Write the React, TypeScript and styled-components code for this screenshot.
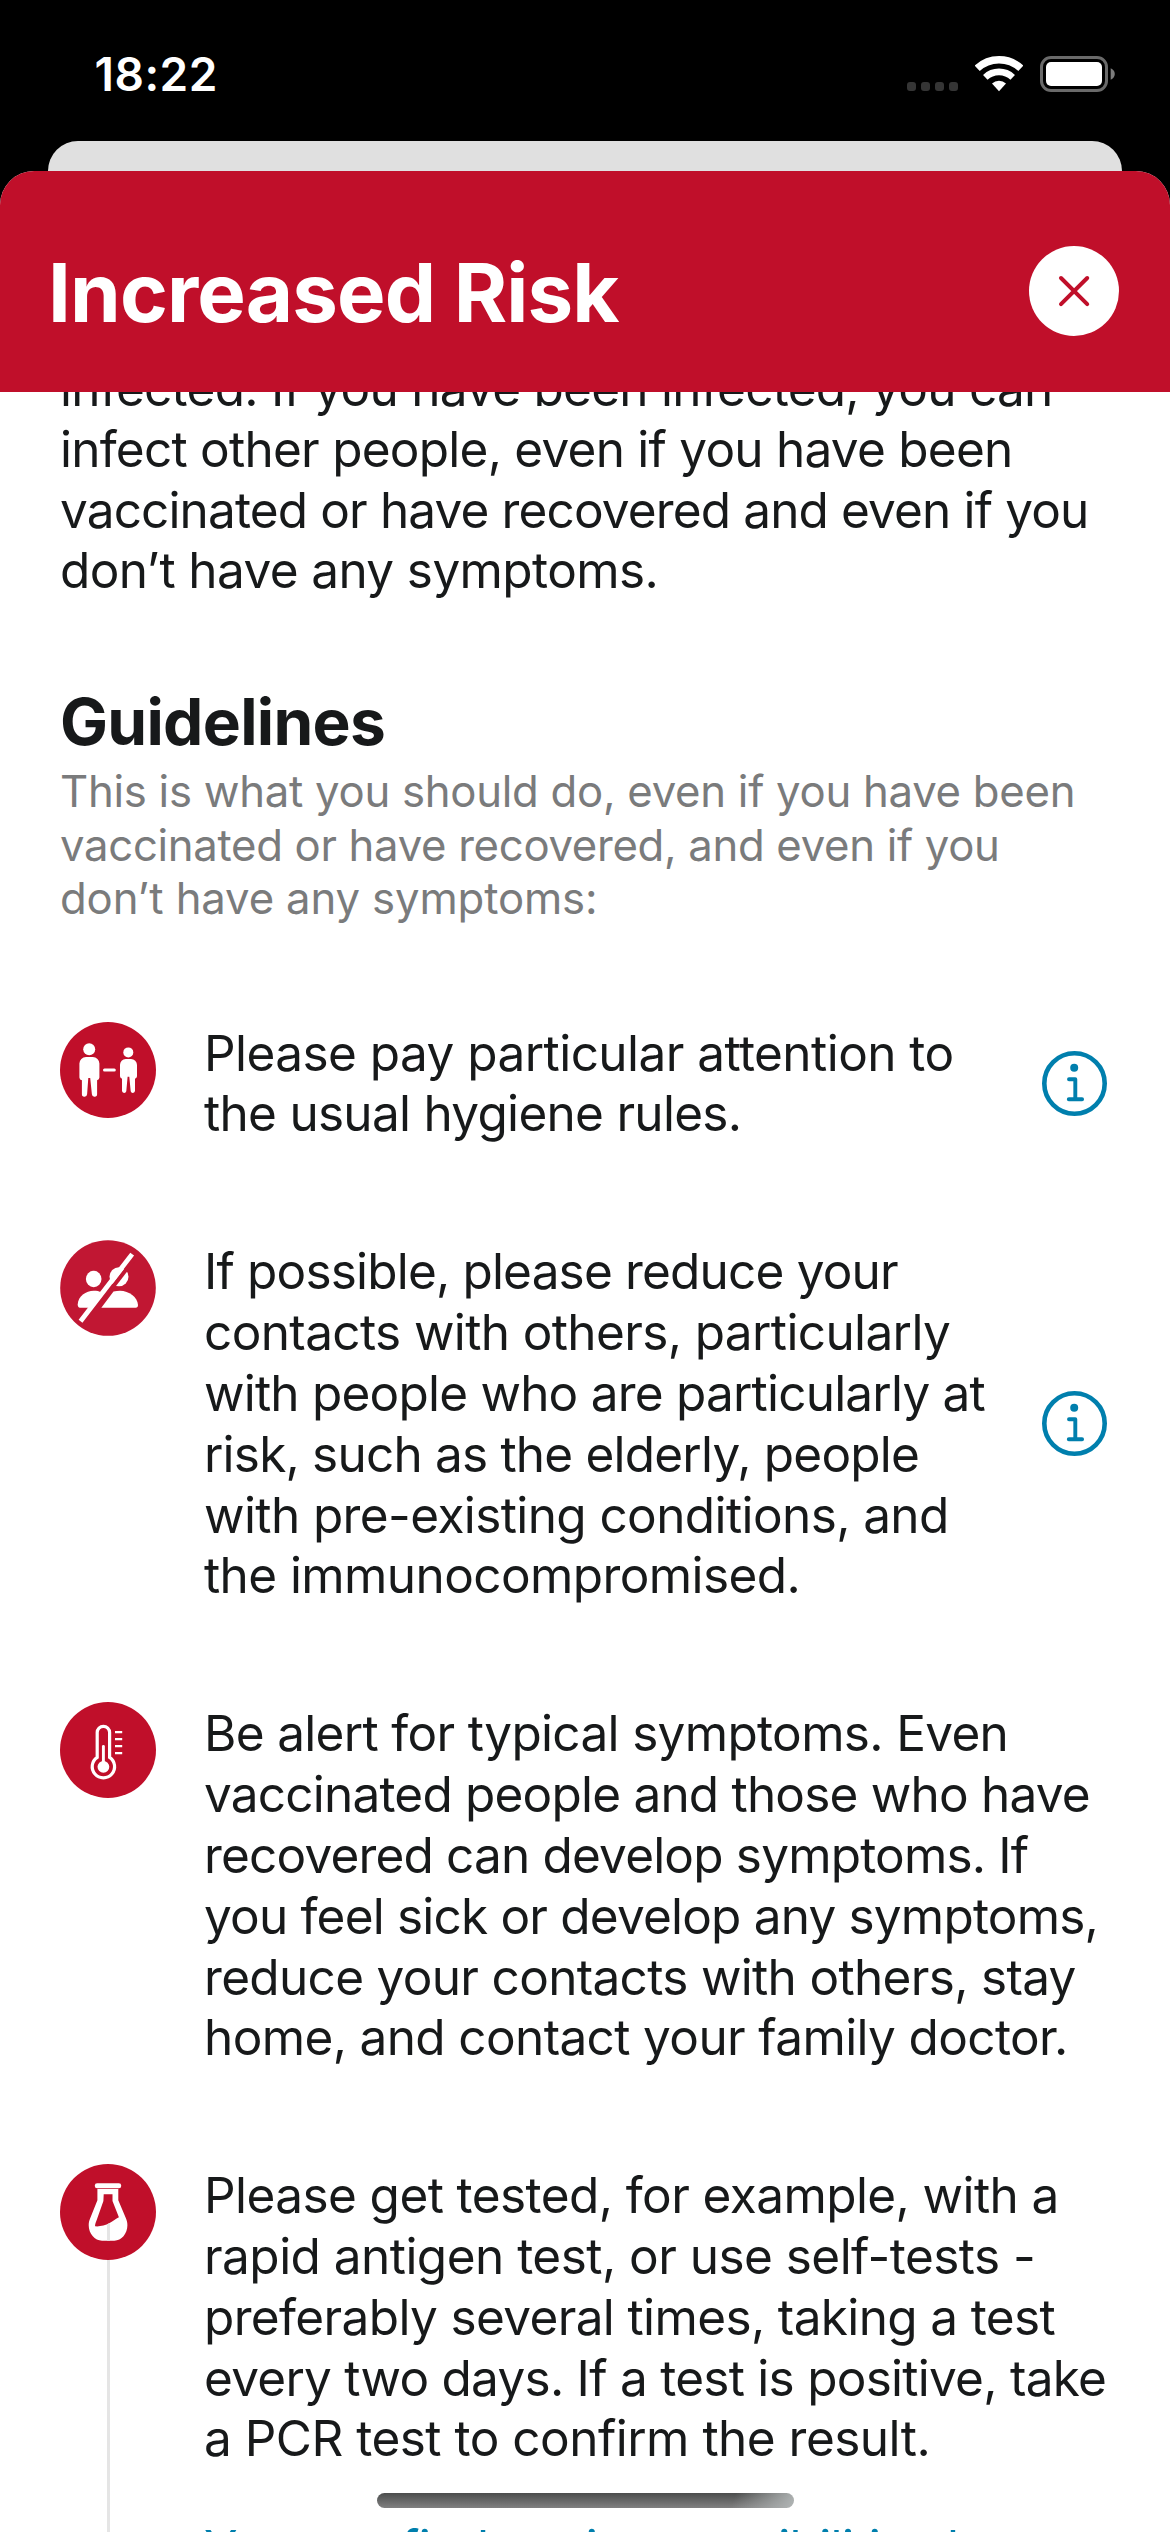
import React from "react";
import styled, { createGlobalStyle } from "styled-components";

const RED = "#c00f2a";
const INK = "#17191a";
const MUTED = "#7a7b7c";
const BLUE = "#007fad";

const GlobalStyle = createGlobalStyle`
  *, *::before, *::after { box-sizing: border-box; }
  body {
    margin: 0;
    background: #000;
    font-family: Inter, "Liberation Sans", sans-serif;
  }
  h1, h2, p, ul { margin: 0; padding: 0; }
`;

const Screen = styled.div`
  position: relative;
  display: flex;
  flex-direction: column;
  width: 1170px;
  height: 2532px;
  overflow: hidden;
  background: #000;
`;

const StatusBar = styled.div`
  display: flex;
  flex: none;
  justify-content: space-between;
  height: 141px;
  padding: 46px 55px 0 94.5px;
`;

const Clock = styled.span`
  color: #fff;
  font-size: 46px;
  font-weight: 600;
  line-height: 56px;
  letter-spacing: 0.5px;
`;

const StatusIcons = styled.div`
  display: flex;
  align-items: flex-start;
  padding-top: 9px;
`;

const SignalDots = styled.div`
  display: flex;
  gap: 5px;
  margin: 27px 17px 0 0;
`;

const SignalDot = styled.i`
  width: 9px;
  height: 9px;
  border-radius: 3px;
  background: #353535;
`;

const WifiIcon = styled.svg`
  width: 48px;
  height: 37px;
  margin-right: 17px;
`;

const BatteryIcon = styled.svg`
  width: 75px;
  height: 36px;
  margin-top: 1px;
`;

const BackCard = styled.div`
  flex: none;
  height: 30px;
  margin: 0 48px;
  border-radius: 32px 32px 0 0;
  background: #e0e0e0;
`;

const Sheet = styled.main`
  display: flex;
  flex: 1;
  flex-direction: column;
  min-height: 0;
  border-radius: 34px 34px 0 0;
  overflow: hidden;
  background: #fff;
`;

const SheetHeader = styled.header`
  display: flex;
  flex: none;
  align-items: flex-start;
  justify-content: space-between;
  height: 221px;
  padding: 75px 51px 0 48px;
  background: ${RED};
`;

const Title = styled.h1`
  margin-top: -2px;
  color: #fff;
  font-size: 81.5px;
  font-weight: 700;
  line-height: 98px;
  letter-spacing: -0.866px;
  white-space: nowrap;
`;

const CloseButton = styled.button`
  width: 90px;
  height: 90px;
  padding: 0;
  border: 0;
  border-radius: 50%;
  background: #fff;

  svg {
    display: block;
    width: 90px;
    height: 90px;
  }
`;

const Content = styled.section`
  display: flex;
  flex: 1;
  flex-direction: column;
  min-height: 0;
  overflow: hidden;
`;

const Intro = styled.p`
  flex: none;
  height: 243px;
  margin: -34px 60px 0;
  color: ${INK};
  font-size: 49.5px;
  line-height: 61px;
`;

const SectionTitle = styled.h2`
  flex: none;
  margin: 82px 60px 0;
  color: ${INK};
  font-size: 64px;
  font-weight: 700;
  line-height: 78px;
  letter-spacing: -0.705px;
`;

const SectionNote = styled.p`
  flex: none;
  margin: 4px 60px 0;
  height: 160px;
  color: ${MUTED};
  font-size: 43.7px;
  line-height: 54px;
`;

const Line = styled.span<{ $track: number }>`
  display: block;
  white-space: nowrap;
  letter-spacing: ${(p) => p.$track}px;

  &:last-child {
    margin-top: -1px;
  }
`;

const Guidelines = styled.ul`
  display: flex;
  flex: none;
  flex-direction: column;
  gap: 96px;
  margin: 97px 60px 0;
  list-style: none;
`;

const Guideline = styled.li`
  display: flex;
  align-items: stretch;
  gap: 48px;
`;

const Rail = styled.div`
  display: flex;
  flex: none;
  flex-direction: column;
  width: 96px;
`;

const Badge = styled.svg`
  flex: none;
  display: block;
  width: 96px;
  height: 96px;
`;

const Connector = styled.div`
  flex: 1;
  width: 3px;
  margin-left: 47px;
  background: #e5e5e5;
`;

const GuidelineBody = styled.div`
  flex: 1;
  min-width: 0;
`;

const GuidelineText = styled.p<{ $lines: number }>`
  height: ${(p) => p.$lines * 61}px;
  padding-top: 1px;
  color: ${INK};
  font-size: 49.5px;
  line-height: 61px;
`;

const GuidelineLink = styled.a`
  display: block;
  height: 160px;
  margin-top: 49px;
  color: ${BLUE};
  font-size: 49.5px;
  line-height: 61px;
  letter-spacing: -0.662px;
  white-space: nowrap;
`;

const InfoButton = styled.button`
  align-self: center;
  flex: none;
  width: 65px;
  height: 65px;
  margin-right: 3px;
  padding: 0;
  border: 0;
  background: none;

  svg {
    display: block;
    width: 65px;
    height: 65px;
  }
`;

const HomeIndicator = styled.div`
  position: absolute;
  bottom: 24px;
  left: 377px;
  width: 417px;
  height: 15px;
  border-radius: 8px;
  background:
    linear-gradient(110deg, rgba(176, 180, 180, 0) 85%, rgba(176, 180, 180, 0.95) 99%),
    linear-gradient(180deg, #4c4d4d, #808080);
`;

type LineData = [text: string, track: number];

const Lines = ({ data }: { data: LineData[] }) => (
  <>
    {data.map(([text, track]) => (
      <Line key={text} $track={track}>
        {text}
      </Line>
    ))}
  </>
);

const DistanceBadge = () => (
  <Badge viewBox="0 0 96 96">
    <circle cx="48" cy="48" r="48" fill={RED} />
    <g fill="#fff">
      <circle cx="29.2" cy="27.2" r="6" />
      <path d="M26 35h6.8a6.6 6.6 0 0 1 6.6 6.6V55.5a3 3 0 0 1-2.3 2.8V72a2.6 2.6 0 0 1-5.2.3L30.2 56h-1.9L27.1 72.3a2.6 2.6 0 0 1-5.2-.3V58.3a3 3 0 0 1-2.5-2.8V41.6A6.6 6.6 0 0 1 26 35z" />
      <circle cx="68.3" cy="30.4" r="5" />
      <path d="M65.7 37h5.3a6 6 0 0 1 6 6v11.2a2.7 2.7 0 0 1-2 2.5V69a2.2 2.2 0 0 1-4.3.3L69.3 54.7h-1.7L66.3 69.3A2.2 2.2 0 0 1 62 69V56.7a2.7 2.7 0 0 1-2-2.5V43a6 6 0 0 1 5.7-6z" />
      <rect x="43" y="46.4" width="12.8" height="3.1" rx="1.5" />
    </g>
  </Badge>
);

const NoContactsBadge = () => (
  <Badge viewBox="0 0 96 96">
    <circle cx="48" cy="48" r="47.8" fill="#c11733" />
    <g fill="#fff">
      <ellipse cx="33.7" cy="39" rx="7.8" ry="8.3" />
      <path d="M17.7 64.5C18 56 26 50.7 33.7 50.7c3 0 5.4.4 8 1.7L30 67.7H20c-1.6 0-2.3-1.2-2.3-3.2z" />
      <circle cx="59" cy="36.8" r="9.5" />
      <path d="M41.3 67.7 53.5 51.6c2.4-.6 4.5-.9 6.5-.9 9 0 17.6 6.5 18 14.3 0 2-.8 2.700-2.3 2.7z" />
    </g>
    <path d="M72.6 21.2 27.5 79.8" stroke="#c11733" strokeWidth="4" />
    <path d="M70.7 16 22 79.3" stroke="#fff" strokeWidth="4.800" strokeLinecap="square" />
  </Badge>
);

const ThermometerBadge = () => (
  <Badge viewBox="0 0 96 96">
    <circle cx="48" cy="48" r="48" fill={RED} />
    <path
      d="M37.2 55.3V30.5a6.2 6.2 0 0 1 12.4 0v24.8a11.2 11.2 0 1 1-12.4 0z"
      fill="none"
      stroke="#fff"
      strokeWidth="3.2"
    />
    <path d="M43.4 44.5V62" stroke="#fff" strokeWidth="2.9" strokeLinecap="round" />
    <circle cx="43.4" cy="64.8" r="5.9" fill="#fff" />
    <path d="M55 30.2h7.2M55 37.2h7.2M55 44.2h7.2M55 51.1h7.2" stroke="#fff" strokeWidth="2.3" />
  </Badge>
);

const FlaskBadge = () => (
  <Badge viewBox="0 0 96 96">
    <circle cx="48" cy="48" r="48" fill={RED} />
    <rect x="34.8" y="19.3" width="26.4" height="5" rx="2.3" fill="#fff" />
    <path
      d="M37.4 25h20.9v11.3l7.4 17.5c1.2 2.9 1.7 4.8 1.7 7.5 0 8.5-6 15.4-13 15.4H42c-7.2 0-13.3-7-13.3-15.4 0-2.7.5-4.6 1.7-7.5l7-17.5z"
      fill="#fff"
    />
    <path
      d="M43.7 30.3h8.8V37l6.4 16.3c-3.2 1.6-5.7 3.8-9.3 5.8-4.6 2.6-10 3.6-14.6 3.2.1-2 .7-3.8 1.7-6.3L43.4 37z"
      fill={RED}
    />
    <path d="M47 60.3l3-1.3v17.7h-3z" fill="#e5e5e5" />
  </Badge>
);

const Info = () => (
  <InfoButton aria-label="More information">
    <svg viewBox="0 0 65 65" fill="none" stroke={BLUE}>
      <circle cx="32.5" cy="32.5" r="30.2" strokeWidth="4.6" />
      <circle cx="32.2" cy="16.8" r="4" fill={BLUE} stroke="none" />
      <path d="M27 28.3h6.3v19.800M26.8 48.2h13.3" strokeWidth="3.9" strokeLinecap="round" strokeLinejoin="round" />
    </svg>
  </InfoButton>
);

const INTRO: LineData[] = [
  ["infected. If you have been infected, you can", -0.728],
  ["infect other people, even if you have been", -0.752],
  ["vaccinated or have recovered and even if you", -0.862],
  ["don’t have any symptoms.", -0.61],
];

const NOTE: LineData[] = [
  ["This is what you should do, even if you have been", -0.272],
  ["vaccinated or have recovered, and even if you", -0.315],
  ["don’t have any symptoms:", -0.141],
];

const GUIDELINES: { badge: React.ReactNode; lines: LineData[]; info?: boolean; link?: string }[] = [
  {
    badge: <DistanceBadge />,
    info: true,
    lines: [
      ["Please pay particular attention to", -0.55],
      ["the usual hygiene rules.", -0.712],
    ],
  },
  {
    badge: <NoContactsBadge />,
    info: true,
    lines: [
      ["If possible, please reduce your", -0.819],
      ["contacts with others, particularly", -0.62],
      ["with people who are particularly at", -0.784],
      ["risk, such as the elderly, people", -0.796],
      ["with pre-existing conditions, and", -0.6],
      ["the immunocompromised.", -0.591],
    ],
  },
  {
    badge: <ThermometerBadge />,
    lines: [
      ["Be alert for typical symptoms. Even", -0.669],
      ["vaccinated people and those who have", -0.794],
      ["recovered can develop symptoms. If", -0.818],
      ["you feel sick or develop any symptoms,", -0.803],
      ["reduce your contacts with others, stay", -0.676],
      ["home, and contact your family doctor.", -0.63],
    ],
  },
  {
    badge: <FlaskBadge />,
    link: "You can find testing possibilities here",
    lines: [
      ["Please get tested, for example, with a", -0.578],
      ["rapid antigen test, or use self-tests -", -0.531],
      ["preferably several times, taking a test", -0.63],
      ["every two days. If a test is positive, take", -0.737],
      ["a PCR test to confirm the result.", -0.51],
    ],
  },
];

export default function App() {
  return (
    <Screen>
      <GlobalStyle />
      <StatusBar>
        <Clock>18:22</Clock>
        <StatusIcons>
          <SignalDots>
            <SignalDot />
            <SignalDot />
            <SignalDot />
            <SignalDot />
          </SignalDots>
          <WifiIcon viewBox="0 0 48 37" fill="none">
            <path d="M2.2 13.3a32 32 0 0 1 43.6 0" stroke="#fff" strokeWidth="7.4" />
            <path d="M10.3 22.3a20 20 0 0 1 27.4 0" stroke="#fff" strokeWidth="6.6" />
            <path d="M24 36.3 17 28.6a10.3 10.3 0 0 1 14 0z" fill="#fff" />
          </WifiIcon>
          <BatteryIcon viewBox="0 0 75 36" fill="none">
            <rect x="1.5" y="1.5" width="65" height="33" rx="9.5" stroke="#6a6a6a" strokeWidth="3" />
            <rect x="6" y="6" width="56" height="24" rx="5" fill="#fff" />
            <path d="M70.7 12.3c2.4.9 4.1 3.1 4.1 5.7s-1.700 4.8-4.1 5.7z" fill="#7c7c7c" />
          </BatteryIcon>
        </StatusIcons>
      </StatusBar>
      <BackCard />
      <Sheet>
        <SheetHeader>
          <Title>Increased Risk</Title>
          <CloseButton aria-label="Close">
            <svg viewBox="0 0 90 90" fill="none">
              <path d="M32 32 58.2 58.2M58.2 32 32 58.2" stroke={RED} strokeWidth="4" strokeLinecap="round" />
            </svg>
          </CloseButton>
        </SheetHeader>
        <Content>
          <Intro>
            <Lines data={INTRO} />
          </Intro>
          <SectionTitle>Guidelines</SectionTitle>
          <SectionNote>
            <Lines data={NOTE} />
          </SectionNote>
          <Guidelines>
            {GUIDELINES.map(({ badge, lines, info, link }, i) => (
              <Guideline key={i}>
                <Rail>
                  {badge}
                  {link && <Connector />}
                </Rail>
                <GuidelineBody>
                  <GuidelineText $lines={lines.length}>
                    <Lines data={lines} />
                  </GuidelineText>
                  {link && <GuidelineLink>{link}</GuidelineLink>}
                </GuidelineBody>
                {info && <Info />}
              </Guideline>
            ))}
          </Guidelines>
        </Content>
      </Sheet>
      <HomeIndicator />
    </Screen>
  );
}
